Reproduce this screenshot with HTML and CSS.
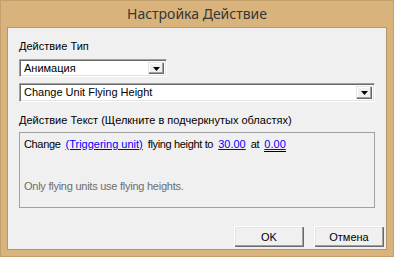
FILE: index.html
```html
<!DOCTYPE html>
<html>
<head>
<meta charset="utf-8">
<link rel="stylesheet" href="styles.css">
</head>
<body>
<div class="window">
  <div class="titlebar">Настройка Действие</div>
  <div class="client">
    <div class="label first">Действие Тип</div>
    <div class="combo small">
      <span class="value">Анимация</span>
      <span class="dropbtn"><svg width="7" height="4" viewBox="0 0 7 4"><path d="M0 0H7L3.5 4Z" fill="#000"/></svg></span>
    </div>
    <div class="combo wide">
      <span class="value">Change Unit Flying Height</span>
      <span class="dropbtn"><svg width="7" height="4" viewBox="0 0 7 4"><path d="M0 0H7L3.5 4Z" fill="#000"/></svg></span>
    </div>
    <div class="label second">Действие Текст (Щелкните в подчеркнутых областях)</div>
    <div class="textbox">
      <div class="line"><span class="plain">Change</span> <a class="link">(Triggering unit)</a> <span class="plain">flying height to</span> <a class="link">30.00</a> <span class="plain">at</span> <a class="link focused">0.00</a></div>
      <div class="hint">Only flying units use flying heights.</div>
    </div>
    <div class="buttons">
      <button class="btn">OK</button>
      <button class="btn">Отмена</button>
    </div>
  </div>
</div>
</body>
</html>
```

FILE: styles.css
```css
* { box-sizing: border-box; }
html, body { margin: 0; padding: 0; }
body { width: 394px; height: 257px; overflow: hidden; background: #d8b47c; }

.window {
  width: 394px;
  height: 257px;
  background: #d8b47c;
  border: 1px solid #c3a06b;
  padding: 0 6px 6px 6px;
  display: flex;
  flex-direction: column;
}

.titlebar {
  height: 26px;
  flex: none;
  text-align: center;
  font-family: "Noto Sans", "Open Sans", sans-serif;
  font-size: 14px;
  line-height: 26px;
  color: #363636;
}

.client {
  flex: 1;
  border: 1px solid #b5976a;
  background: #f0f0f0;
  display: flex;
  flex-direction: column;
  font-family: "Liberation Sans", Arial, sans-serif;
  font-size: 11px;
  line-height: 13px;
  color: #000;
  padding: 0 0 0 11px;
}

.label.first { margin-top: 12px; }
.label.second { margin-top: 12px; }

.combo {
  display: flex;
  align-items: center;
  background: #fff;
  border-top: 1px solid #a0a0a0;
  border-left: 1px solid #a0a0a0;
  border-right: 1px solid #fff;
  border-bottom: 1px solid #fff;
  box-shadow: inset 1px 1px 0 #696969, inset -1px -1px 0 #e3e3e3;
  padding: 2px 2px 2px 4px;
}
.combo.small { width: 148px; height: 18px; margin-top: 6px; }
.combo.wide { width: 356px; height: 19px; margin-top: 6px; }

.combo .value { flex: 1; white-space: nowrap; }

.dropbtn {
  width: 16px;
  height: 100%;
  background: #f0f0f0;
  display: flex;
  align-items: center;
  justify-content: center;
  box-shadow: inset 1px 1px 0 #e3e3e3, inset -1px -1px 0 #696969, inset -2px -2px 0 #a0a0a0, inset 2px 2px 0 #fff;
}
.dropbtn svg { display: block; margin-top: 1px; }

.textbox {
  width: 356px;
  height: 76px;
  margin-top: 5px;
  border: 1px solid #a0a0a0;
  padding: 5px 0 0 4px;
}

.plain { letter-spacing: -0.35px; }

.link {
  color: #0000ff;
  text-decoration: underline;
  margin: 0 2px;
}
.link.focused {
  border-bottom: 1px solid #000;
  padding-bottom: 1px;
}

.hint {
  margin-top: 29px;
  color: #6d6d6d;
  letter-spacing: -0.25px;
}

.buttons {
  display: flex;
  justify-content: flex-end;
  gap: 10px;
  margin-top: auto;
  margin-bottom: 2px;
  margin-right: 2px;
}

.btn {
  width: 70px;
  height: 21px;
  font-family: "Liberation Sans", Arial, sans-serif;
  font-size: 11px;
  color: #000;
  background: #f0f0f0;
  border: none;
  padding: 0;
  box-shadow: inset 1px 1px 0 #fff, inset -1px -1px 0 #696969, inset -2px -2px 0 #a0a0a0, inset 2px 2px 0 #e3e3e3;
}
```
